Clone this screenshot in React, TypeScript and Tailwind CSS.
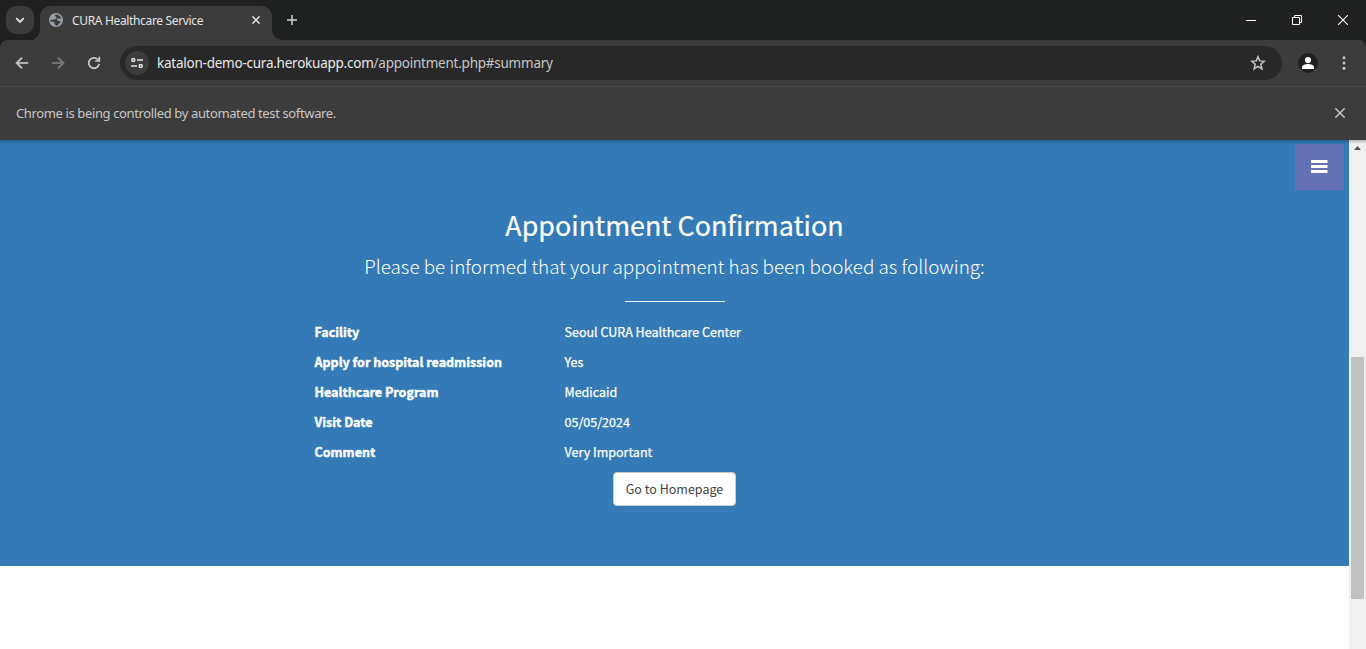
import type { ReactNode } from "react";

const rows: [string, string][] = [
  ["Facility", "Seoul CURA Healthcare Center"],
  ["Apply for hospital readmission", "Yes"],
  ["Healthcare Program", "Medicaid"],
  ["Visit Date", "05/05/2024"],
  ["Comment", "Very Important"],
];

function Icon({ className, box = "0 0 24 24", children }: { className: string; box?: string; children: ReactNode }) {
  return (
    <svg viewBox={box} className={`block shrink-0 ${className}`} fill="currentColor">
      {children}
    </svg>
  );
}

function TabStrip() {
  return (
    <div className="flex h-10 shrink-0 bg-[#1f2120]">
      <div className="mt-1.5 ml-1.5 flex size-7 shrink-0 items-center justify-center rounded-[10px] bg-[#3c3c3c] text-[#e3e3e3]">
        <Icon className="size-2.5" box="0 0 10 10">
          <path d="M1.2 3.2 5 7l3.8-3.8" fill="none" stroke="currentColor" strokeWidth="1.8" />
        </Icon>
      </div>
      <div className="flex w-1.5 shrink-0 items-end">
        <Icon className="h-2.5 w-1.5 text-[#3c3c3c]" box="4 0 6 10">
          <path d="M10 0v10H0A10 10 0 0 0 10 0z" />
        </Icon>
      </div>
      <div className="mt-1.5 flex h-[34px] w-[232px] shrink-0 items-center rounded-t-[10px] bg-[#3c3c3c] pb-1.5 pl-2">
        <Icon className="ml-[1px] size-3.5" box="0 0 14 14">
          <circle cx="7" cy="7" r="7" fill="#9aa0aa" />
          <path d="M7.200 1.500C5.800 1.700 5.600 3 6.500 3.600c.8.400 1.200.8 1 1.700C7.200 6.400 5.500 6 4.600 6.600c-.8.500-2.300.2-3.200.2a5.700 5.700 0 0 0 .3 2.300c1-.3 3-.5 3.600.3.400.6-.2 1.500.8 2 .7.400.2 1.100.6 1.200 1 .2 1.900-.1 2.600-.5-.1-1 .5-1.500 1.400-1.800.8-.300.900-1 1.300-1.700-1.100-.1-1.900-.1-2.400-.7C9 7.100 8 7.600 7.800 6.600c-.2-1.100 1.200-1.200 2-1 .7.200 1.500.5 2.300-.100A5.700 5.700 0 0 0 7.200 1.500z" fill="#3c3c3c" />
        </Icon>
        <span className="ml-[9px] w-[170px] whitespace-nowrap pt-px text-[12px] tracking-[-0.34px] text-[#e3e3e3]">CURA Healthcare Service</span>
        <Icon className="ml-[10px] size-2 text-[#e3e3e3]" box="0 0 8 8">
          <path d="m.4.4 7.200 7.200M7.600.4.4 7.600" stroke="currentColor" strokeWidth="1.500" />
        </Icon>
      </div>
      <div className="flex w-[15px] shrink-0 items-end">
        <Icon className="size-2.5 text-[#3c3c3c]" box="0 0 10 10">
          <path d="M0 0v10h10A10 10 0 0 1 0 0z" />
        </Icon>
      </div>
      <Icon className="mt-[15px] size-2.5 text-[#d0d0d0]" box="0 0 10 10">
        <path d="M5 0v10M0 5h10" stroke="currentColor" strokeWidth="1.500" />
      </Icon>
      <div className="ml-auto flex text-white">
        <Icon className="mt-[15px] mr-9 h-2.5 w-2.5" box="0 0 10 10">
          <path d="M0 5h10v1H0z" />
        </Icon>
        <Icon className="mt-[15px] mr-9 size-2.5" box="0 0 10 10">
          <path d="M.5 2.500h7v7h-7zM2.500 2.500v-2h7v7h-2" fill="none" stroke="currentColor" />
        </Icon>
        <Icon className="mt-[15px] mr-[18px] size-2.5" box="0 0 10 10">
          <path d="m0 0 10 10M10 0 0 10" stroke="currentColor" strokeWidth="1.100" />
        </Icon>
      </div>
    </div>
  );
}

function Toolbar() {
  return (
    <div className="bg-[#1f2120]">
      <div className="flex h-[46px] items-center rounded-t-lg bg-[#3c3c3c] text-[#c7c7c7]">
        <Icon className="ml-3.5 size-4">
          <path d="M21 11H6.800l6-6L11 3.200 2.200 12l8.800 8.800 1.800-1.800-6-6H21z" stroke="currentColor" strokeWidth=".5" />
        </Icon>
        <Icon className="ml-5 size-4 text-[#7c7c7c]">
          <path d="M3 11h14.200l-6-6L13 3.200l8.800 8.800-8.800 8.800-1.800-1.800 6-6H3z" stroke="currentColor" strokeWidth=".5" />
        </Icon>
        <Icon className="ml-5 size-4" box="0 0 16 16">
          <path d="M13.100 8.800A5.200 5.200 0 1 1 11.800 4.500l1.200 1.300" fill="none" stroke="currentColor" strokeWidth="1.800" />
          <path d="M14.200 1.800v5H9.200V5.200h3.300V1.800z" />
        </Icon>
        <div className="ml-[18px] flex h-[34px] w-[1162px] items-center rounded-full bg-[#282828] pl-[5px]">
          <div className="flex size-6 items-center justify-center rounded-full bg-[#3c3c3c] text-[#e3e3e3]">
            <Icon className="size-3" box="0 0 12 12">
              <g fill="none" stroke="currentColor" strokeWidth="1.500">
                <circle cx="2.300" cy="3" r="1.500" />
                <path d="M6 3h6M0 9h6" />
                <circle cx="9.700" cy="9" r="1.500" />
              </g>
            </Icon>
          </div>
          <span className="ml-2 whitespace-nowrap text-[13.500px] tracking-[-0.240px] text-[#c7c7c7]">
            <span className="text-[#e8e8e8]">katalon-demo-cura.herokuapp.com</span>/appointment.php#summary
          </span>
          <Icon className="mr-4 ml-auto size-4" box="0 0 16 16">
            <path d="m8 1.700 1.700 4.200 4.600.4-3.500 3 1.100 4.500L8 11.400l-3.900 2.400 1.100-4.500-3.500-3 4.600-.4z" fill="none" stroke="currentColor" strokeWidth="1.500" />
          </Icon>
        </div>
        <Icon className="ml-4 size-5" box="0 0 20 20">
          <circle cx="10" cy="10" r="10" fill="#1f2120" />
          <circle cx="10" cy="7" r="3.100" fill="#fff" />
          <path d="M4 16v-1.600C4 12.100 7.500 11 10 11s6 1.100 6 3.400V16z" fill="#fff" />
        </Icon>
        <Icon className="ml-[18px] size-4" box="0 0 16 16">
          <circle cx="8" cy="2.800" r="1.500" />
          <circle cx="8" cy="8" r="1.500" />
          <circle cx="8" cy="13.200" r="1.500" />
        </Icon>
      </div>
    </div>
  );
}

function Confirmation() {
  return (
    <section className="flex h-[426px] flex-col items-center bg-[#347ab6] font-['Noto_Sans_CJK_SC',sans-serif] text-white">
      <h2 className="mt-[67px] h-9 whitespace-nowrap text-[26.880px] leading-9 [-webkit-text-stroke:0.200px_white]">Appointment Confirmation</h2>
      <p className="mt-[9px] h-7 whitespace-nowrap text-[18.850px] leading-7 font-light">Please be informed that your appointment has been booked as following:</p>
      <hr className="mt-[21px] w-[100px] border-t border-[#eee]" />
      <dl className="mt-[15px] w-[720px]">
        {rows.map(([label, value]) => (
          <div key={label} className="flex h-[30px] items-center text-[12.530px] whitespace-nowrap">
            <dt className="w-[250px] font-bold [-webkit-text-stroke:0.400px_white]">{label}</dt>
            <dd className="[-webkit-text-stroke:0.250px_white]">{value}</dd>
          </div>
        ))}
      </dl>
      <button className="mt-[5px] flex h-[34px] w-[123px] items-center justify-center rounded-[4px] border border-[#ccc] bg-white text-[12.530px] whitespace-nowrap text-[#444]">
        Go to Homepage
      </button>
    </section>
  );
}

export default function App() {
  return (
    <div className="flex h-[649px] w-[1366px] flex-col overflow-hidden bg-white font-['Noto_Sans',sans-serif]">
      <TabStrip />
      <Toolbar />
      <div className="flex h-[54px] shrink-0 items-center border-t border-[#4a4a4a] bg-[#3c3c3c] pr-[21px] pl-4">
        <span className="whitespace-nowrap text-[13px] tracking-[-0.370px] text-[#c7c7c7]">Chrome is being controlled by automated test software.</span>
        <Icon className="mb-px ml-auto size-2.5 text-[#c7c7c7]" box="0 0 10 10">
          <path d="m.3.3 9.400 9.400M9.700.3.3 9.700" stroke="currentColor" strokeWidth="1.500" />
        </Icon>
      </div>
      <div className="relative flex min-h-0 flex-1">
        <main className="w-[1349px]">
          <Confirmation />
        </main>
        <div className="flex w-[17px] flex-col bg-[#f0f0f0]">
          <Icon className="mt-[6px] ml-[5px] h-1 w-[7px] text-[#505050]" box="0 0 7 4">
            <path d="M0 4 3.500 0 7 4z" />
          </Icon>
          <div className="mt-[207px] ml-[2px] h-[242px] w-[13px] bg-[#c1c1c1]" />
        </div>
        <button className="absolute top-1 left-[1295px] flex h-[46px] w-[49px] items-center justify-center bg-[#6671b5] pb-px text-white">
          <Icon className="h-[13px] w-[17px]" box="0 0 17 13">
            <path d="M0 0h16.500v3H0zM0 5h16.500v3H0zM0 10h16.500v3H0z" />
          </Icon>
        </button>
        <div className="absolute inset-x-0 top-0 h-1 bg-linear-to-b from-black/25 to-transparent" />
      </div>
    </div>
  );
}
